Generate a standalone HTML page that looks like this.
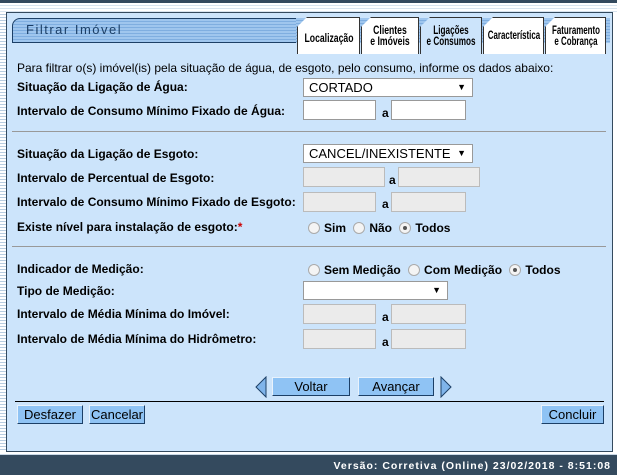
<!DOCTYPE html><html><head><meta charset="utf-8"><style>
*{margin:0;padding:0;box-sizing:border-box}
body{width:617px;height:475px;position:relative;background:#fff;font-family:"Liberation Sans",Arial,sans-serif;overflow:hidden}
.a{position:absolute}
.lbl{position:absolute;left:17px;font-size:12px;font-weight:bold;color:#000}
.in{position:absolute;height:20px;background:#fff;border:1px solid #999}
.dis{background:#ebebeb;border-color:#bbb}
.sel{position:absolute;height:19px;background:#fff;border:1px solid #999;font-size:13px;padding:1px 5px}
.sel:after{content:"▼";position:absolute;right:6px;top:3px;font-size:9px}
.t{position:absolute;font-size:12px;font-weight:bold}
.r{display:inline-block;width:12px;height:12px;border:1px solid #aaa;border-radius:50%;background:#f4f4f4;vertical-align:-2px;margin-right:4px;position:relative}
.r.on:after{content:"";position:absolute;left:3px;top:3px;width:4px;height:4px;border-radius:50%;background:#555}
.rg{position:absolute;font-size:12px;font-weight:bold}
.btn{position:absolute;height:19px;background:#8fc3f4;border:1px solid #1c3f66;border-top-color:#e8f2fc;border-left-color:#e8f2fc;font-size:13px;text-align:center;line-height:17px;color:#000}
.tab{position:absolute;top:17px;height:37px;background:#fff;border:1px solid #333;border-bottom:none;font-weight:bold;font-size:12px;text-align:center;line-height:11px;clip-path:polygon(10px 0,100% 0,100% 100%,0 100%,0 10px);white-space:nowrap}
.tab span{position:absolute;left:50%;transform:translateX(-50%) scaleX(.72)}
.hr{position:absolute;left:12px;width:594px;height:1px;background:#999}
</style></head><body>
<div class="a" style="left:0;top:0;width:617px;height:3px;background:#344a5e"></div>
<div class="a" style="left:0;top:3px;width:617px;height:9px;background:repeating-linear-gradient(#fff 0 2px,#d8e4ef 2px 3px)"></div>
<div class="a" style="left:0;top:12px;width:6px;height:440px;background:repeating-linear-gradient(#fff 0 2px,#b9cde0 2px 3px)"></div>
<div class="a" style="left:6px;top:12px;width:607px;height:440px;background:#cce4fb;border:1px solid #344a5e"></div>
<div class="a" style="left:12px;top:18px;width:300px;height:25px;border:1px solid #1c3f66;border-radius:8px 0 0 0;background:repeating-linear-gradient(#9fc6ee 0 2px,#7faee0 2px 3px)"></div>
<div class="a" style="left:26px;top:22px;font-size:13px;letter-spacing:1.5px;color:#1c3f66">Filtrar Imóvel</div>
<div class="a" style="left:296px;top:18px;width:314px;height:25px;background:repeating-linear-gradient(#9fc6ee 0 2px,#7faee0 2px 3px)"></div>
<div class="tab" style="left:297px;width:63px"><span style="top:15px">Localização</span></div>
<div class="tab" style="left:361px;width:58px"><span style="top:7px">Clientes<br>e Imóveis</span></div>
<div class="tab" style="left:420px;width:62px;background:#cce4fb"><span style="top:7px;transform:translateX(-50%) scaleX(.68)">Ligações<br>e Consumos</span></div>
<div class="tab" style="left:483px;width:61px"><span style="top:12px;transform:translateX(-50%) scaleX(.66)">Característica</span></div>
<div class="tab" style="left:545px;width:61px"><span style="top:7px;transform:translateX(-50%) scaleX(.66)">Faturamento<br>e Cobrança</span></div>
<div class="a" style="left:17px;top:61px;font-size:12px">Para filtrar o(s) imóvel(is) pela situação de água, de esgoto, pelo consumo, informe os dados abaixo:</div>
<div class="lbl" style="top:80px">Situação da Ligação de Água:</div>
<div class="sel" style="left:303px;top:78px;width:170px">CORTADO</div>
<div class="lbl" style="top:104px">Intervalo de Consumo Mínimo Fixado de Água:</div>
<div class="in" style="left:303px;top:100px;width:73px"></div><div class="t" style="left:382px;top:106px">a</div><div class="in" style="left:391px;top:100px;width:75px"></div>
<div class="hr" style="top:131px"></div>
<div class="lbl" style="top:147px">Situação da Ligação de Esgoto:</div>
<div class="sel" style="left:303px;top:144px;width:170px">CANCEL/INEXISTENTE</div>
<div class="lbl" style="top:171px">Intervalo de Percentual de Esgoto:</div>
<div class="in dis" style="left:303px;top:167px;width:82px"></div><div class="t" style="left:389px;top:173px">a</div><div class="in dis" style="left:398px;top:167px;width:82px"></div>
<div class="lbl" style="top:195px">Intervalo de Consumo Mínimo Fixado de Esgoto:</div>
<div class="in dis" style="left:303px;top:192px;width:73px"></div><div class="t" style="left:382px;top:197px">a</div><div class="in dis" style="left:391px;top:192px;width:75px"></div>
<div class="lbl" style="top:220px">Existe nível para instalação de esgoto:<span style="color:#c00">*</span></div>
<div class="rg" style="left:308px;top:221px"><span class="r"></span>Sim <span class="r" style="margin-left:4px"></span>Não <span class="r on" style="margin-left:4px"></span>Todos</div>
<div class="hr" style="top:246px"></div>
<div class="lbl" style="top:262px">Indicador de Medição:</div>
<div class="rg" style="left:308px;top:263px"><span class="r"></span>Sem Medição <span class="r" style="margin-left:4px"></span>Com Medição <span class="r on" style="margin-left:4px"></span>Todos</div>
<div class="lbl" style="top:284px">Tipo de Medição:</div>
<div class="sel" style="left:303px;top:281px;width:145px"></div>
<div class="lbl" style="top:307px">Intervalo de Média Mínima do Imóvel:</div>
<div class="in dis" style="left:303px;top:304px;width:73px"></div><div class="t" style="left:382px;top:310px">a</div><div class="in dis" style="left:391px;top:304px;width:75px"></div>
<div class="lbl" style="top:332px">Intervalo de Média Mínima do Hidrômetro:</div>
<div class="in dis" style="left:303px;top:329px;width:73px"></div><div class="t" style="left:382px;top:335px">a</div><div class="in dis" style="left:391px;top:329px;width:75px"></div>
<svg class="a" style="left:255px;top:376px" width="12" height="22"><path d="M11 1 L1 11 L11 21 Z" fill="#7fb4ea" stroke="#1c3f66"/></svg>
<div class="btn" style="left:272px;top:377px;width:78px">Voltar</div>
<div class="btn" style="left:358px;top:377px;width:76px">Avançar</div>
<svg class="a" style="left:440px;top:376px" width="12" height="22"><path d="M1 1 L11 11 L1 21 Z" fill="#7fb4ea" stroke="#1c3f66"/></svg>
<div class="a" style="left:15px;top:401px;width:589px;height:1px;background:#000"></div>
<div class="btn" style="left:17px;top:405px;width:66px">Desfazer</div>
<div class="btn" style="left:89px;top:405px;width:56px">Cancelar</div>
<div class="btn" style="left:541px;top:405px;width:63px">Concluir</div>
<div class="a" style="left:0;top:453px;width:617px;height:2px;background:repeating-linear-gradient(#fff 0 1px,#c9d8e6 1px 2px)"></div>
<div class="a" style="left:0;top:455px;width:617px;height:20px;background:#344a5e;color:#fff;font-size:10.5px;font-weight:bold;letter-spacing:1px;text-align:right;padding:5px 6px 0 0">Versão: Corretiva (Online) 23/02/2018 - 8:51:08</div>
</body></html>
